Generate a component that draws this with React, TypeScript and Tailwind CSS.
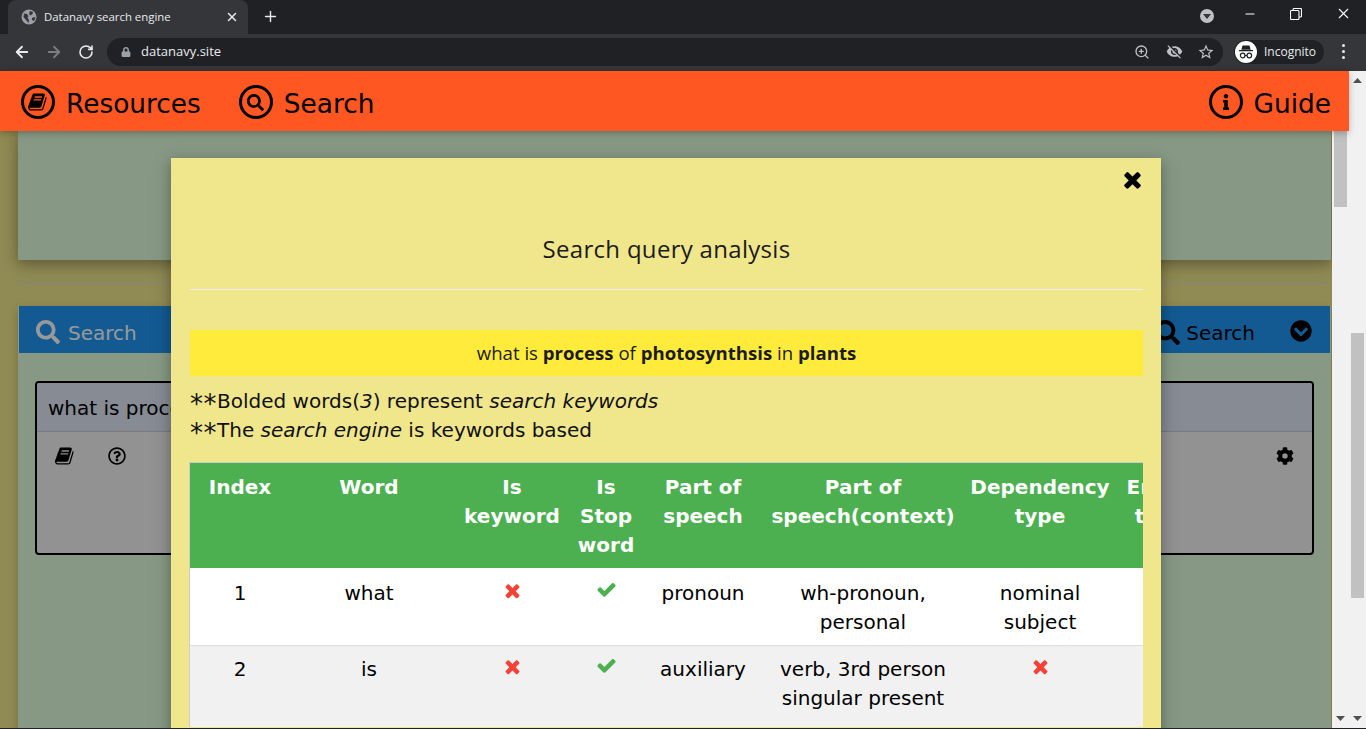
import React from "react";
import { FaSearch, FaCog, FaRegQuestionCircle, FaChevronCircleDown, FaInfo, FaLock } from "react-icons/fa";
import { MdVisibilityOff, MdOutlineStarBorder } from "react-icons/md";
import { ArrowLeft, ArrowRight, RotateCw, ZoomIn, Plus, X, Minus } from "lucide-react";

const BOOK = "M1639 478q40 57 18 129l-275 906q-19 64-76.5 107.5t-122.5 43.5h-923q-77 0-148.5-53.5t-99.5-131.5q-24-67-2-127 0-4 3-27t4-37q1-8-3-21.5t-3-19.5q2-11 8-21t16.5-23.5 16.5-23.5q23-38 45-91.5t30-91.5q3-10 .5-30t-.5-28q3-11 17-28t17-23q21-36 42-92t25-90q1-9-2.5-32t.5-28q4-13 22-30.5t22-22.5q19-26 42.5-84.5t27.5-96.5q1-8-3-25.5t-2-26.5q2-8 9-18t18-23 17-21q8-12 16.5-30.5t15-35 16-36 19.5-32 26.5-23.5 36-11.5 47.5 5.5l-1 3q38-9 51-9h761q74 0 114 56t18 130l-274 906q-36 119-71.5 153.5t-128.5 34.5h-869q-27 0-38 15-11 16-1 43 24 70 144 70h923q29 0 56-15.5t35-41.5l300-987q7-22 5-57 38 15 59 43zm-1064 2q-4 13 2 22.5t20 9.5h608q13 0 25.5-9.5t16.5-22.5l21-64q4-13-2-22.5t-20-9.5h-608q-13 0-25.5 9.5t-16.5 22.5zm-83 256q-4 13 2 22.5t20 9.5h608q13 0 25.5-9.5t16.5-22.5l21-64q4-13-2-22.5t-20-9.5h-608q-13 0-25.5 9.5t-16.5 22.5z";
const CROSS = "M1490 1322q0 40-28 68l-136 136q-28 28-68 28t-68-28l-294-294-294 294q-28 28-68 28t-68-28l-136-136q-28-28-28-68t28-68l294-294-294-294q-28-28-28-68t28-68l136-136q28-28 68-28t68 28l294 294 294-294q28-28 68-28t68 28l136 136q28 28 28 68t-28 68l-294 294 294 294q28 28 28 68z";
const CHECK = "M1671 566q0 40-28 68l-724 724-136 136q-28 28-68 28t-68-28l-136-136-362-362q-28-28-28-68t28-68l136-136q28-28 68-28t68 28l294 295 656-657q28-28 68-28t68 28l136 136q28 28 28 68z";

function Glyph({ d, size, className }: { d: string; size: number; className?: string }) {
  return (
    <svg width={size} height={size} viewBox="0 0 1792 1792" fill="currentColor" className={className}>
      <path d={d} />
    </svg>
  );
}

function Arrow({ down }: { down?: boolean }) {
  return (
    <svg width="9" height="5" viewBox="0 0 9 5" fill="#505050">
      {down ? <path d="M0 0h9L4.5 5z" /> : <path d="M0 5h9L4.5 0z" />}
    </svg>
  );
}

function NavIcon({ children }: { children: React.ReactNode }) {
  return (
    <span className="w-[34px] h-[34px] rounded-full border-[3px] border-black flex items-center justify-center shrink-0">
      {children}
    </span>
  );
}

const No = () => <Glyph d={CROSS} size={21} className="inline-block text-[#f44336] mt-[-7px]" />;
const Yes = () => <Glyph d={CHECK} size={21} className="inline-block text-[#4caf50] mt-[-8px]" />;
const Stars = () => <span className="text-[26px] leading-none tracking-[0.5px] align-[-5px]">**</span>;

const widths = [100, 158, 128, 60, 134, 186, 168, 72, 120];

export default function App() {
  return (
    <div className="w-[1366px] h-[729px] overflow-hidden flex flex-col bg-[#202124] border-b border-[#202124] font-['DejaVu_Sans',sans-serif]">
      {/* Browser tab strip */}
      <div className="h-[34px] bg-[#202124] flex items-end shrink-0 relative">
        <div className="ml-[8px] w-[240px] h-[34px] bg-[#35363a] rounded-t-[8px] flex items-center pl-[13px] pr-[9px] font-['Open_Sans',sans-serif] text-[11.4px] text-[#e8eaed]">
          <svg width="16" height="16" viewBox="0 0 16 16" className="shrink-0">
            <circle cx="8" cy="8" r="7.5" fill="#9aa0a6" />
            <path d="M3 4.5l3 .5 1.5 2-1 1.5L8 11l-.5 3L5 11 2.5 8zM9 2l3 1-.5 2-2 1.5L8 5zM11 9l2.5-1 1 1-1.5 3-2-1z" fill="#35363a" />
          </svg>
          <span className="ml-[7px] flex-1 whitespace-nowrap">Datanavy search engine</span>
          <X size={14} strokeWidth={2.5} color="#e8eaed" />
        </div>
        <Plus size={17} strokeWidth={2} color="#e8eaed" className="ml-[14px] mb-[9px]" />
        <div className="flex-1" />
        <div className="w-[14px] h-[14px] mb-[11px] rounded-full bg-[#bdc1c6] flex items-center justify-center mr-[29px]">
          <svg width="8" height="5" viewBox="0 0 8 5" fill="#35363a"><path d="M0 0h8L4 5z" /></svg>
        </div>
        <div className="flex items-center mb-[12px] text-white">
          <Minus size={14} strokeWidth={1.8} className="mr-[32px]" />
          <svg width="12" height="12" viewBox="0 0 12 12" fill="none" stroke="#fff" strokeWidth="1.1" className="mr-[33px] ml-[1px]">
            <rect x="0.5" y="2.5" width="8.5" height="9" rx="1" />
            <path d="M3 2.5V1.5a1 1 0 0 1 1-1h6.5a1 1 0 0 1 1 1V8a1 1 0 0 1-1 1H9" />
          </svg>
          <X size={17} strokeWidth={1.5} className="mr-[14px]" />
        </div>
      </div>

      {/* Browser toolbar */}
      <div className="h-[37px] bg-[#35363a] flex items-center shrink-0 relative pb-[2px]">
        <ArrowLeft size={18} strokeWidth={2.4} color="#e8eaed" className="ml-[13px]" />
        <ArrowRight size={18} strokeWidth={2.4} color="#7b7d80" className="ml-[14px]" />
        <RotateCw size={16} strokeWidth={2.4} color="#e8eaed" className="ml-[15px]" />
        <div className="ml-[13px] w-[1116px] h-[28px] rounded-full bg-[#202124] flex items-center pl-[14px] pr-[8px] text-[#e8eaed]">
          <FaLock size={10} color="#9aa0a6" />
          <span className="ml-[10px] font-['Open_Sans',sans-serif] text-[13px] flex-1">datanavy.site</span>
          <ZoomIn size={16} color="#bdc1c6" className="mr-[16px]" />
          <MdVisibilityOff size={17} color="#bdc1c6" className="mr-[14px]" />
          <MdOutlineStarBorder size={18} color="#bdc1c6" />
        </div>
        <div className="ml-[11px] w-[90px] h-[24px] rounded-full bg-[#202124] flex items-center pl-[1px]">
          <span className="w-[22px] h-[22px] rounded-full bg-white flex items-center justify-center shrink-0">
            <svg width="16" height="14" viewBox="0 0 16 14" fill="#202124">
              <path d="M4.5 0.5h7l1.2 4.2H3.3zM1 5h14v1.2H1z" />
              <circle cx="4.7" cy="10.5" r="2.3" fill="none" stroke="#202124" strokeWidth="1.2" />
              <circle cx="11.3" cy="10.5" r="2.3" fill="none" stroke="#202124" strokeWidth="1.2" />
              <path d="M7 10h2v.9H7z" />
            </svg>
          </span>
          <span className="ml-[7px] font-['Open_Sans',sans-serif] text-[12px] text-[#e8eaed]">Incognito</span>
        </div>
        <div className="ml-[18px] flex flex-col gap-[3px]">
          <i className="w-[3px] h-[3px] rounded-full bg-[#e8eaed] block" />
          <i className="w-[3px] h-[3px] rounded-full bg-[#e8eaed] block" />
          <i className="w-[3px] h-[3px] rounded-full bg-[#e8eaed] block" />
        </div>
      </div>

      {/* Viewport */}
      <div className="flex-1 min-h-0 flex">
        <div className="w-[1349px] flex flex-col min-h-0">
          <nav className="h-[60px] shrink-0 bg-[#ff5722] relative z-20 flex items-center pt-[2px] pl-[21px] pr-[18px] text-black text-[26.4px] shadow-[0_2px_5px_rgba(0,0,0,0.16),0_2px_10px_rgba(0,0,0,0.12)]">
            <NavIcon><Glyph d={BOOK} size={20} /></NavIcon>
            <span className="ml-[11px] pt-[4px]">Resources</span>
            <span className="ml-[38px]"><NavIcon><FaSearch size={17} /></NavIcon></span>
            <span className="ml-[11px] pt-[4px]">Search</span>
            <div className="flex-1" />
            <NavIcon><FaInfo size={16} /></NavIcon>
            <span className="ml-[11px] pt-[4px]">Guide</span>
          </nav>

          <div className="flex-1 min-h-0 flex">
            {/* Page under the modal */}
            <div className="w-[1332px] relative overflow-hidden bg-[#f0e68c]">
              <div className="ml-[18px] w-[1313px] h-[129px] bg-[#e2ffde] shadow-[0_4px_10px_rgba(0,0,0,0.2),0_4px_20px_rgba(0,0,0,0.19)]" />
              <div className="ml-[18px] w-[1313px] mt-[22px] h-px bg-[#ddd]" />
              <div className="ml-[18px] w-[1313px] mt-[23px] h-[500px] bg-[#e2ffde] shadow-[0_4px_10px_rgba(0,0,0,0.2)]">
                <div className="mx-px h-[47px] bg-[#2196f3] flex items-center pl-[17px] pr-[18px] text-[20px]">
                  <FaSearch size={24} className="text-white mt-[5px]" />
                  <span className="ml-[8px] pt-[6px] text-white">Search</span>
                  <div className="flex-1" />
                  <FaSearch size={25} className="text-black mt-[5px]" />
                  <span className="ml-[6px] pt-[6px] text-black">Search</span>
                  <FaChevronCircleDown size={22} className="ml-[35px] mt-[3px] text-black" />
                </div>
                <div className="ml-[17px] mt-[28px] w-[1279px] h-[174px] border-2 border-black rounded-[4px] bg-[#f3f3f3] overflow-hidden">
                  <div className="h-[49px] bg-[#dfe8f7] border-b border-[#ccc] flex items-center pl-[11px] pt-[2px] text-[20px] text-black">
                    what is process of photosynthsis in plants
                  </div>
                  <div className="flex items-start pt-[14px] pl-[18px] pr-[18px] text-black">
                    <Glyph d={BOOK} size={20} />
                    <FaRegQuestionCircle size={18} className="ml-[33px] mt-[1px]" />
                    <div className="flex-1" />
                    <FaCog size={18} className="mt-[1px]" />
                  </div>
                </div>
              </div>

              {/* Modal overlay */}
              <div className="absolute inset-0 bg-black/40 pt-[27px] pl-[171px] overflow-hidden">
                <div className="w-[990px] h-[700px] bg-[#f0e68c] pl-[19px] pr-[18px] relative shadow-[0_4px_10px_rgba(0,0,0,0.2),0_4px_20px_rgba(0,0,0,0.19)]">
                  <Glyph d={CROSS} size={25} className="absolute right-[16px] top-[9px] text-black" />
                  <div className="pt-[73px] h-[132px] border-b border-[#eee] text-center font-['Open_Sans',sans-serif] text-[24px] tracking-[0.3px] leading-[36px] text-[#1b1b1b]">
                    Search query analysis
                  </div>
                  <div className="mt-[40px] h-[46px] bg-[#ffeb3b] flex items-center justify-center font-['Open_Sans',sans-serif] text-[18.6px] text-[#1b1b1b]">
                    <span>what is <b>process</b> of <b>photosynthsis</b> in <b>plants</b></span>
                  </div>
                  <div className="mt-[11px] text-[20px] leading-[29px] text-[#111]">
                    <div className="h-[29px]"><Stars />Bolded words(<i>3</i>) represent <i>search keywords</i></div>
                    <div className="h-[29px]"><Stars />The <i>search engine</i> is keywords based</div>
                  </div>
                  <div className="mt-[17px] -ml-px overflow-hidden border-t border-l border-[#ccc]">
                    <table className="table-fixed border-collapse text-center text-[20px] leading-[29px] text-black w-[1126px]">
                      <colgroup>
                        {widths.map((w, i) => (
                          <col key={i} style={{ width: w }} />
                        ))}
                      </colgroup>
                      <thead>
                        <tr className="bg-[#4caf50] text-white align-top h-[105px]">
                          <th className="pt-[10px] font-bold">Index</th>
                          <th className="pt-[10px] font-bold">Word</th>
                          <th className="pt-[10px] font-bold">Is<br />keyword</th>
                          <th className="pt-[10px] font-bold">Is<br />Stop<br />word</th>
                          <th className="pt-[10px] font-bold">Part of<br />speech</th>
                          <th className="pt-[10px] font-bold">Part of<br />speech(context)</th>
                          <th className="pt-[10px] font-bold">Dependency<br />type</th>
                          <th className="pt-[10px] font-bold">Entity<br />type</th>
                          <th className="pt-[10px] font-bold">Lemma</th>
                        </tr>
                      </thead>
                      <tbody>
                        <tr className="bg-white border-b border-[#ddd] align-top h-[77px]">
                          <td className="pt-[11px]">1</td>
                          <td className="pt-[11px]">what</td>
                          <td className="pt-[10px]"><No /></td>
                          <td className="pt-[10px]"><Yes /></td>
                          <td className="pt-[11px]">pronoun</td>
                          <td className="pt-[11px]">wh-pronoun,<br />personal</td>
                          <td className="pt-[11px]">nominal<br />subject</td>
                          <td />
                          <td />
                        </tr>
                        <tr className="bg-[#f1f1f1] align-top h-[82px]">
                          <td className="pt-[9px]">2</td>
                          <td className="pt-[9px]">is</td>
                          <td className="pt-[9px]"><No /></td>
                          <td className="pt-[8px]"><Yes /></td>
                          <td className="pt-[9px]">auxiliary</td>
                          <td className="pt-[9px]">verb, 3rd person<br />singular present</td>
                          <td className="pt-[9px]"><No /></td>
                          <td />
                          <td />
                        </tr>
                      </tbody>
                    </table>
                  </div>
                </div>
              </div>
            </div>

            {/* Overlay's scrollbar */}
            <div className="w-[17px] bg-[#f1f1f1] flex flex-col items-center relative">
              <div className="w-[13px] h-[76px] bg-[#c1c1c1]" />
              <div className="flex-1" />
              <div className="mb-[7px] flex"><Arrow down /></div>
            </div>
          </div>
        </div>

        {/* Page scrollbar */}
        <div className="w-[17px] bg-[#f1f1f1] flex flex-col items-center">
          <div className="mt-[7px] flex"><Arrow /></div>
          <div className="mt-[250px] w-[13px] h-[265px] bg-[#c1c1c1]" />
          <div className="flex-1" />
          <div className="mb-[7px] flex"><Arrow down /></div>
        </div>
      </div>
    </div>
  );
}
